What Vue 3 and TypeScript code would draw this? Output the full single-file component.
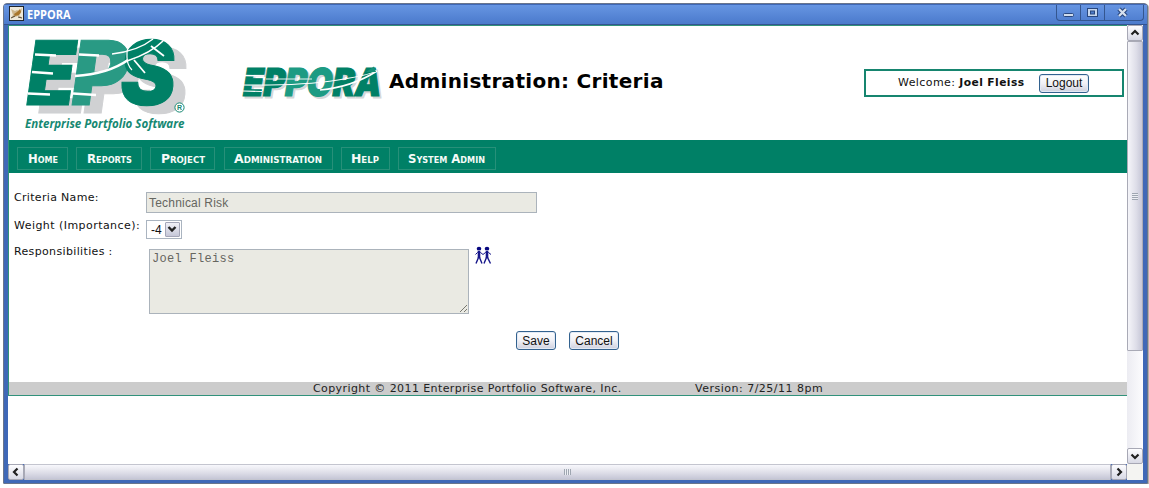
<script setup lang="ts">
import { ref } from 'vue'

interface MenuEntry {
  label: string
  width: number
  textWidth: number
}

const menu: MenuEntry[] = [
  { label: 'Home', width: 51, textWidth: 30 },
  { label: 'Reports', width: 66, textWidth: 45 },
  { label: 'Project', width: 65, textWidth: 44 },
  { label: 'Administration', width: 109, textWidth: 88 },
  { label: 'Help', width: 49, textWidth: 28 },
  { label: 'System Admin', width: 98, textWidth: 77 },
]

const criteriaName = ref('Technical Risk')
const responsible = ref('Joel Fleiss')
const weight = ref('-4')
</script>

<template>
  <div class="window">
    <header class="titlebar">
      <svg class="app-icon" width="15" height="15" viewBox="0 0 15 15">
        <rect x=".5" y=".5" width="14" height="14" fill="#eee9da" stroke="#20252d" />
        <path d="M2 3l4 2 2-1 2 1 3-3-1 5-2 2 3 3-4-2-3 1-4 1 2-3z" fill="#cdb68c" />
        <path d="M5 8l3-2 3-3 1 3-2 3-4 1z" fill="#a8762b" />
        <path d="M2 12l4-2M9 11l4 1" stroke="#514431" />
      </svg>
      <svg class="app-title" width="50" height="18">
        <text x="0" y="14" textLength="43.500" lengthAdjust="spacingAndGlyphs">EPPORA</text>
      </svg>
      <div class="controls">
        <span class="control"><svg width="24" height="16"><rect x="6.500" y="8.500" width="10" height="3" rx="1" fill="#cfdced" stroke="#29477e" /></svg></span>
        <span class="control"><svg width="24" height="16"><rect x="6.500" y="3.500" width="10" height="8" fill="#c5d6ed" stroke="#29477e" /><rect x="9.500" y="6" width="4" height="3" fill="#4c7cc9" stroke="#29477e" /></svg></span>
        <span class="control close"><svg width="38" height="16"><path d="M14 4l7 7M21 4l-7 7" stroke="#29477e" stroke-width="4.500" /><path d="M14 4l7 7M21 4l-7 7" stroke="#d6e1ef" stroke-width="2.300" /></svg></span>
      </div>
    </header>

    <div class="viewport">
      <main class="page">
        <section class="masthead">
          <svg class="eps-logo" width="200" height="113" viewBox="8 26 200 113">
            <g class="eps shade" transform="translate(12 8)">
              <g transform="translate(23 105) skewX(-8)"><text textLength="49" lengthAdjust="spacingAndGlyphs">E</text></g>
              <g transform="translate(68 105) skewX(-8)"><text textLength="57" lengthAdjust="spacingAndGlyphs">P</text></g>
              <g transform="translate(118 105) skewX(-4)"><text textLength="56" lengthAdjust="spacingAndGlyphs">S</text></g>
            </g>
            <g class="eps">
              <g transform="translate(23 105) skewX(-8)"><text textLength="49" lengthAdjust="spacingAndGlyphs">E</text></g>
              <g transform="translate(68 105) skewX(-8)"><text class="light" textLength="57" lengthAdjust="spacingAndGlyphs">P</text></g>
              <g transform="translate(118 105) skewX(-4)"><text textLength="56" lengthAdjust="spacingAndGlyphs">S</text></g>
            </g>
            <g fill="none" stroke="#fff">
              <path d="M35 54.500L56 55.500M32 72L53 73.500M28 93.500L50 94.500" stroke-width="2.600" />
              <path d="M79 54.500L99 55.500M73 93.500L96 95" stroke-width="2.600" />
              <path d="M75 76Q108 74 128 60" stroke-width="2.600" />
              <path d="M112 54Q138 51 153 39" stroke-width="1.400" />
              <path d="M127 61Q151 53 163 41" stroke-width="1.600" />
              <path d="M134 60L145 73M151 46L164 56" stroke-width="1.800" />
              <path d="M133 39Q126 47 127 57Q127 65 132 70" stroke-width="1.200" />
            </g>
            <circle cx="179.500" cy="107.500" r="4.600" fill="#fff" stroke="#168872" />
            <text class="registered" x="177" y="110">R</text>
            <text class="tagline" x="25" y="128" textLength="159.500" lengthAdjust="spacingAndGlyphs">Enterprise Portfolio Software</text>
          </svg>

          <svg class="eppora-logo" width="142" height="36" viewBox="241 64 142 36">
            <g class="eppora shade" transform="translate(243.500 98) skewX(-9)">
              <text textLength="138" lengthAdjust="spacingAndGlyphs">EPPORA</text>
            </g>
            <g class="eppora" transform="translate(241.500 96) skewX(-9)">
              <text textLength="138" lengthAdjust="spacingAndGlyphs">EP<tspan class="light">PO</tspan>RA</text>
            </g>
            <g fill="none" stroke="#fff">
              <path d="M244 75.500L264 76" stroke-width="1.400" />
              <path d="M242 85Q300 86 338 80T376 70" stroke-width="1.100" />
              <path d="M243 91L262 91.500" stroke-width="1.100" />
              <path d="M320 90Q352 87 377 71" stroke-width="1.600" />
              <path d="M266 79L312 79" stroke-width=".9" />
            </g>
            <path d="M366 72L374 66.500L376 72Z" fill="#159078" />
          </svg>

          <h1>Administration: Criteria</h1>

          <div class="welcome">
            <span class="greeting">Welcome: <b>Joel Fleiss</b></span>
            <button class="button logout">Logout</button>
          </div>
        </section>

        <nav class="menu">
          <a v-for="entry in menu" :key="entry.label" :style="{ width: entry.width + 'px' }">
            <svg :width="entry.textWidth" height="18">
              <text x="0" y="12" :textLength="entry.textWidth" lengthAdjust="spacingAndGlyphs">{{ entry.label }}</text>
            </svg>
          </a>
        </nav>

        <section class="form">
          <div class="row name-row">
            <label class="l1">Criteria Name:</label>
            <div class="field name-field">{{ criteriaName }}</div>
          </div>
          <div class="row weight-row">
            <label class="l2">Weight (Importance):</label>
            <div class="select">
              <span>{{ weight }}</span>
              <i><svg width="14" height="15"><path d="M3.500 5L7 8.500L10.500 5" fill="none" stroke="#222" stroke-width="2.400" /></svg></i>
            </div>
          </div>
          <div class="row resp-row">
            <label class="l3">Responsibilities :</label>
            <div class="field area">
              {{ responsible }}
              <svg class="grip" width="9" height="9"><path d="M1 8L8 1M5 8L8 5" stroke="#77776f" /></svg>
            </div>
            <svg class="people" width="18" height="20" viewBox="474 246 18 20">
              <g fill="none" stroke="#16168a" stroke-width="1">
                <path d="M475.500 254.500L477.500 252.500H480.500L483 254.500L485.500 252.500H488.500L491 254.500" />
                <path d="M476 263.500L478.500 257.500H479.500L482 263.500M484 263.500L486.500 257.500H487.500L490.500 263.500" stroke-width="1.400" />
                <path d="M479 251V258M487 251V258" stroke-width="2.600" />
              </g>
              <g fill="#080880"><ellipse cx="479" cy="248.700" rx="2.300" ry="1.900" /><ellipse cx="487" cy="248.700" rx="2.300" ry="1.900" /></g>
            </svg>
          </div>
          <div class="actions">
            <button class="button save">Save</button>
            <button class="button cancel">Cancel</button>
          </div>
        </section>

        <footer>
          <span class="copyright">Copyright © 2011 Enterprise Portfolio Software, Inc.</span>
          <span class="version">Version: 7/25/11 8pm</span>
        </footer>
      </main>

      <aside class="vbar">
        <i class="arrow"><svg width="14" height="14"><path d="M3.500 8.500L7 5L10.500 8.500" /></svg></i>
        <i class="thumb"><b></b></i>
        <span></span>
        <i class="arrow"><svg width="14" height="14"><path d="M3.500 5.500L7 9L10.500 5.500" /></svg></i>
      </aside>
    </div>

    <div class="hbar">
      <i class="arrow"><svg width="14" height="14"><path d="M8.500 3.500L5 7L8.500 10.500" /></svg></i>
      <i class="thumb"><b></b></i>
      <i class="arrow"><svg width="14" height="14"><path d="M5.500 3.500L9 7L5.500 10.500" /></svg></i>
    </div>
  </div>
</template>

<style>
body {
  margin: 0;
  background: #fff;
  overflow: hidden;
}
</style>

<style scoped>
* {
  box-sizing: border-box;
}
svg {
  overflow: visible;
}
.window {
  width: 1145px;
  height: 481px;
  margin: 3px 0 0 3px;
  display: flex;
  flex-direction: column;
  padding: 1px 4px 4px;
  background: #3f68b7;
  border: 1px solid #69758c;
  border-radius: 4px 4px 1px 1px;
  box-shadow: 1px 1px 0 #b5b1aa;
  font: 11px/14px "DejaVu Sans", sans-serif;
  color: #111;
}
.titlebar {
  height: 20px;
  flex: none;
  display: flex;
  align-items: flex-start;
  margin: 0 -4px;
  padding-left: 5px;
  background: linear-gradient(#6695e2, #4b7acc);
  border-bottom: 1px solid #34548f;
}
.app-icon {
  margin-top: 1px;
}
.app-title {
  margin-left: 3px;
}
.app-title text {
  font: bold 12px "Open Sans", sans-serif;
  fill: #fff;
}
.controls {
  display: flex;
  margin-left: auto;
  margin-right: 3px;
  height: 16px;
  border: 1px solid #34568f;
  border-top: 0;
  border-radius: 0 0 4px 4px;
}
.control {
  width: 24px;
  height: 15px;
  border-right: 1px solid #34568f;
}
.control.close {
  width: 38px;
  border-right: 0;
}
.control svg {
  display: block;
}
.viewport {
  display: flex;
  height: 439px;
  flex: none;
  background: #fff;
}
.page {
  width: 1119px;
  height: 371px;
  border: solid #31927b;
  border-width: 1px 0 1px 1px;
}
.masthead {
  height: 114px;
  display: flex;
}
.eps-logo {
  flex: none;
  margin-left: -1px;
}
.eppora-logo {
  flex: none;
  margin: 38px 0 0 33px;
}
.eps text {
  font: 900 89px Inter, sans-serif;
  fill: #008066;
  stroke: #008066;
  stroke-width: 1;
}
.eps .light {
  fill: #299a84;
  stroke: #299a84;
}
.eps.shade text {
  fill: #d0d1d3;
  stroke: #d0d1d3;
}
.registered {
  font: bold 7px "Liberation Sans", sans-serif;
  fill: #168872;
}
.tagline {
  font: italic bold 13px "Open Sans", sans-serif;
  fill: #168872;
}
.eppora text {
  font: 900 38.500px Inter, sans-serif;
  fill: #008066;
  stroke: #008066;
  stroke-width: 1.200;
}
.eppora .light {
  fill: #1d9b83;
  stroke: #1d9b83;
}
.eppora.shade text {
  fill: #d5d7d8;
  stroke: #d5d7d8;
}
h1 {
  margin: 43px 0 0 6px;
  width: 280px;
  font: bold 20px/24px "DejaVu Sans", sans-serif;
  letter-spacing: .3px;
  color: #000;
  white-space: nowrap;
}
.welcome {
  width: 260px;
  height: 28px;
  margin: 43px 3px 0 auto;
  border: 2px solid #16856f;
  display: flex;
  align-items: center;
}
.greeting {
  width: 141px;
  margin-left: 32px;
  letter-spacing: .42px;
  white-space: nowrap;
}
.greeting b {
  font-size: 10.700px;
}
.button {
  height: 19px;
  padding: 0;
  border: 1px solid #33628f;
  border-radius: 3px;
  background: linear-gradient(#fff 0%, #f1f1f6 50%, #ced0de 100%);
  box-shadow: inset 0 0 0 1px #e3e9f4;
  color: #111;
  font: 12px/16px "Liberation Sans", sans-serif;
}
.logout {
  width: 50px;
}
.menu {
  height: 33px;
  display: flex;
  gap: 8.200px;
  padding: 7px 8px 0;
  background: #008066;
}
.menu a {
  height: 23px;
  border: 1px solid #279079;
  display: flex;
  justify-content: center;
  padding-top: 3px;
}
.menu text {
  font: small-caps bold 11.500px "DejaVu Sans", sans-serif;
  fill: #f5fbf8;
}
.form {
  height: 209px;
  padding: 19px 0 0 5px;
}
.row {
  display: flex;
}
.row label {
  width: 132px;
  white-space: nowrap;
}
.name-row {
  height: 27px;
}
.row .l1 {
  margin-top: -1px;
  letter-spacing: .32px;
}
.row .l2 {
  letter-spacing: .45px;
}
.row .l3 {
  margin-top: -4px;
  letter-spacing: .35px;
}
.field {
  border: 1px solid #abb3bb;
  background: #eaeae3;
  color: #66665f;
}
.name-field {
  width: 391px;
  height: 21px;
  padding: 3px 2px;
  font: 12px/14px "Liberation Sans", sans-serif;
  letter-spacing: .2px;
}
.weight-row {
  height: 30px;
}
.select {
  width: 36px;
  height: 19px;
  margin-top: 1px;
  border: 1px solid #aab4c0;
  display: flex;
  align-items: center;
  justify-content: space-between;
  padding: 0 1px 0 4px;
  font: 12px/16px "Liberation Sans", sans-serif;
}
.select i {
  width: 15px;
  height: 15px;
  border: 1px solid #a4a6b8;
  border-radius: 1px;
  background: linear-gradient(#f0f0f6, #c5c7d8);
}
.select svg {
  display: block;
  margin: -1px;
}
.area {
  width: 320px;
  height: 65px;
  margin-left: 3px;
  padding: 2px;
  font: 12px/14px "Liberation Mono", monospace;
  letter-spacing: .3px;
  position: relative;
}
.grip {
  position: absolute;
  right: 0;
  bottom: 0;
}
.people {
  margin: -3px 0 0 5px;
}
.actions {
  display: flex;
  gap: 13px;
  margin: 17px 0 0 502px;
}
.save {
  width: 40px;
}
.cancel {
  width: 50px;
}
footer {
  height: 13px;
  display: flex;
  padding-left: 304px;
  background: #ccc;
  color: #222;
  line-height: 14px;
  letter-spacing: .41px;
  white-space: nowrap;
}
.copyright {
  width: 382px;
}
.version {
  letter-spacing: .5px;
}
.vbar {
  width: 16px;
  display: flex;
  flex-direction: column;
  background: linear-gradient(90deg, #ececf2, #fcfcfe);
}
.arrow {
  width: 16px;
  height: 16px;
  flex: none;
  border: 1px solid #a7a8b5;
  border-radius: 2px;
  background: linear-gradient(#fdfdff, #d8d9e5);
}
.arrow svg {
  display: block;
}
.arrow path {
  fill: none;
  stroke: #202020;
  stroke-width: 2.200;
}
.thumb {
  display: flex;
  align-items: center;
  justify-content: center;
  border: 1px solid #a9aab6;
  border-radius: 1px;
}
.vbar .thumb {
  height: 310px;
  background: linear-gradient(90deg, #f5f5f9, #dddde8 60%, #c6c7d7);
}
.vbar span {
  flex: 1;
}
.vbar b {
  width: 6px;
  height: 7px;
  background: repeating-linear-gradient(#9fa6b1 0 1px, #eceef3 1px 2px);
}
.hbar {
  width: 1119px;
  height: 16px;
  flex: none;
  display: flex;
  box-shadow: 16px 0 0 #f4f4f2;
}
.hbar .thumb {
  flex: 1;
  border-color: #c4c5cf #a9aab6;
  background: linear-gradient(#f8f8fc, #dedee8 55%, #c5c6d6);
}
.hbar b {
  width: 7px;
  height: 6px;
  background: repeating-linear-gradient(90deg, #9fa6b1 0 1px, #eceef3 1px 2px);
}
</style>
